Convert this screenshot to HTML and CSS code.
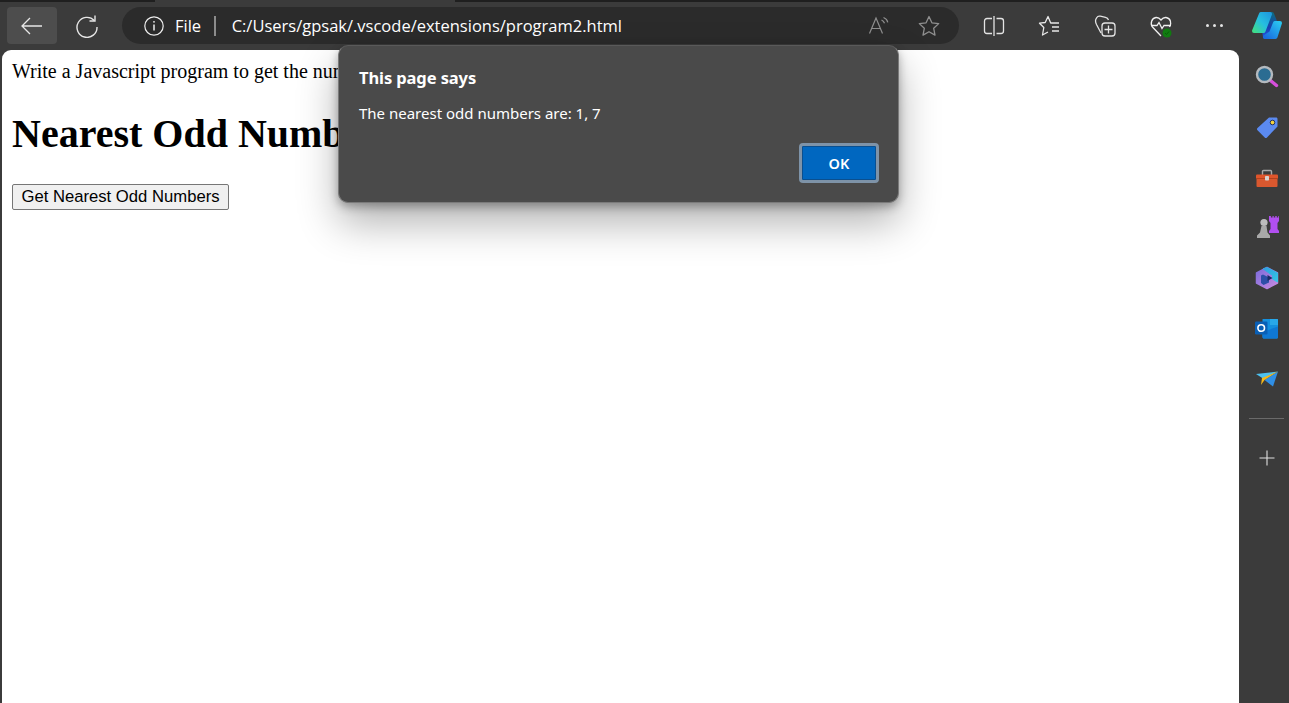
FILE: index.html
```html
<!DOCTYPE html>
<html lang="en">
<head>
<meta charset="utf-8">
<title>Nearest Odd Numbers</title>
<link rel="stylesheet" href="styles.css">
</head>
<body>
<div class="tabstrip"><div class="tabedge"></div><div class="tabgap"></div><div class="tabrest"></div></div>
<header class="toolbar">
  <button class="tool back" aria-label="Back">
    <svg width="24" height="24" viewBox="0 0 24 24" fill="none" stroke="#e6e6e6" stroke-width="1.3"><path d="M2 12h20M10 4l-8 8 8 8"/></svg>
  </button>
  <button class="tool reload" aria-label="Refresh">
    <svg width="24" height="24" viewBox="0 0 24 24" fill="none" stroke="#e6e6e6" stroke-width="1.4"><path d="M19.300 6.500A10 10 0 1 0 22 13"/><path d="M20 1.500v5.500h-5.500"/></svg>
  </button>
  <div class="omnibox">
    <svg class="info" width="20" height="20" viewBox="0 0 20 20" fill="none" stroke="#eee" stroke-width="1.2"><circle cx="10" cy="10" r="9.2"/><path d="M10 8.600v6" stroke-width="1.500"/><circle cx="10" cy="5.800" r=".9" fill="#eee" stroke="none"/></svg>
    <span class="scheme">File</span>
    <span class="sep"></span>
    <span class="url">C:/Users/gpsak/.vscode/extensions/program2.html</span>
    <span class="spacer"></span>
    <svg class="omni-ic" width="22" height="22" viewBox="0 0 22 22" fill="none" stroke="#8f8f8f" stroke-width="1.2"><path d="M1.500 18.500 8 3l6.500 15.500M4 13.500h9"/><path d="M13.500 5c1.500.7 2.500 1.600 3 3.200M15.500 2.500c2.300.9 3.800 2.500 4.300 4.800"/></svg>
    <svg class="omni-ic star" width="22" height="22" viewBox="0 0 22 22" fill="none" stroke="#8f8f8f" stroke-width="1.300"><path d="m11 1.500 2.900 6.300 6.800.8-5 4.700 1.300 6.800-6-3.400-6 3.400 1.300-6.800-5-4.700 6.800-.8z" stroke-linejoin="round"/></svg>
  </div>
  <div class="actions">
    <svg width="22" height="22" viewBox="0 0 22 22" fill="none" stroke="#e4e4e4" stroke-width="1.300"><path d="M9 3.500H4A2.500 2.500 0 0 0 1.500 6v10A2.500 2.500 0 0 0 4 18.500h5M13.500 3.500H18A2.500 2.500 0 0 1 20.500 6v10a2.500 2.500 0 0 1-2.500 2.500h-4.500M11 1v20"/></svg>
    <svg width="22" height="22" viewBox="0 0 22 22" fill="none" stroke="#e8e8e8" stroke-width="1.300"><path d="M14 8h-1.300L10 1.500 7.200 7.500l-5.700.7 4.300 4.300L4.500 20l5.500-3" stroke-linejoin="round"/><path d="M14 8h7M14 12h7M14 16h7"/></svg>
    <svg width="22" height="22" viewBox="0 0 22 22" fill="none" stroke="#e4e4e4" stroke-width="1.300"><path d="M7 18 2.500 9.500C1.500 7.500 1 6 2 4l.7-1.300C3.500 1.300 4.800.9 6.300 1.200l5.200 1.100c1.700.4 2.500 1.200 3 2.700"/><rect x="8" y="8" width="13" height="13" rx="3"/><path d="M14.500 10.500v8M10.500 14.500h8"/></svg>
    <svg width="24" height="24" viewBox="0 0 24 24" fill="none" stroke="#f0f0f0" stroke-width="1.300"><path d="M12 22 3.500 13C1 10 2.500 4 7 3.500c2.200-.2 3.800 1 5 2.500 1.200-1.500 2.800-2.700 5-2.500 4.500.5 6 5.500 3.500 9.500"/><path d="M2 11.500h6l2-3 3 6 2-3h7"/><circle cx="18" cy="19" r="4.500" fill="#107c10" stroke="none"/><path d="m16 19 1.500 1.500 2.500-3" stroke="#0b5a0b" stroke-width="1"/></svg>
    <span class="more"><i></i><i></i><i></i></span>
  </div>
  <svg class="copilot" width="32" height="30" viewBox="0 0 32 30">
    <defs>
      <linearGradient id="cp1" x1="0" y1="1" x2="1" y2="0"><stop offset="0" stop-color="#3fdc8a"/><stop offset=".5" stop-color="#26bfe0"/><stop offset="1" stop-color="#1f9be0"/></linearGradient>
      <linearGradient id="cp2" x1="0" y1="1" x2="1" y2="0"><stop offset="0" stop-color="#1a6be0"/><stop offset=".6" stop-color="#22a0ea"/><stop offset="1" stop-color="#2ac4f0"/></linearGradient>
      <linearGradient id="cp3" x1="0" y1="0" x2="0" y2="1"><stop offset="0" stop-color="#0e6a86"/><stop offset=".6" stop-color="#1a3fb0"/><stop offset="1" stop-color="#2456e0"/></linearGradient>
    </defs>
    <polygon points="16,4 21,4 25,14 24,24 14,27 13,20" fill="url(#cp3)" stroke="url(#cp3)" stroke-width="4" stroke-linejoin="round"/>
    <polygon points="10,4 19,4 12.500,21 3,21" fill="url(#cp1)" stroke="url(#cp1)" stroke-width="4" stroke-linejoin="round"/>
    <polygon points="24,13 29,13 24.500,27 14,27 20,23" fill="url(#cp2)" stroke="url(#cp2)" stroke-width="4" stroke-linejoin="round"/>
  </svg>
</header>
<div class="main">
  <main class="page">
    <p class="intro">Write a Javascript program to get the numbers nearest to a value</p>
    <h1 class="title">Nearest Odd Numbers</h1>
    <button class="get">Get Nearest Odd Numbers</button>
  </main>
  <aside class="sidebar">
    <svg width="24" height="24" viewBox="0 0 24 24" fill="none"><path d="m15.500 15.500 6 5" stroke="#d64fdc" stroke-width="3.400" stroke-linecap="round"/><circle cx="9.500" cy="9.500" r="7.500" fill="#2b6c92" stroke="#b4babf" stroke-width="2.400"/></svg>
    <svg width="24" height="24" viewBox="0 0 24 24"><path d="M14 2.500h7c1 0 1.500.6 1.500 1.500v7.500L12 22.500c-.7.7-1.600.7-2.300 0l-7.200-7.200c-.7-.7-.7-1.600 0-2.300z" fill="#5b8af0"/><circle cx="17.500" cy="7.500" r="2.300" fill="#f4d33c" stroke="#25305c" stroke-width="1"/></svg>
    <svg width="24" height="24" viewBox="0 0 24 24" fill="none"><path d="M7.500 9V5.500c0-.6.400-1 1-1h7c.6 0 1 .4 1 1V9" stroke="#a8a8a8" stroke-width="1.400"/><rect x="1" y="8.500" width="22" height="5" rx="1" fill="#e0552b"/><rect x="1.500" y="13" width="21" height="8" rx="1" fill="#d9582f"/><path d="M1 12.500h22" stroke="#a83d1c" stroke-width=".8"/><rect x="10" y="10" width="4" height="4.500" rx=".8" fill="#d8d2cf"/></svg>
    <svg width="24" height="24" viewBox="0 0 24 24"><path d="M17.500 0h1.200v1.500h1.600V0h1.400v1.500h1.600V0H24v5l-1.500 2v6l1.500 2v2H14v-2l1.500-2V7L14 5V0h1.900v1.500h1.600z" fill="#b14ff0"/><circle cx="9" cy="6.500" r="3.600" fill="#bdbdbd"/><path d="M6.500 10h5l1 6.500 2.500 3v2.500H2v-2.500L5 16.500z" fill="#a9a9a9"/></svg>
    <svg width="24" height="24" viewBox="0 0 24 24"><defs><linearGradient id="m1" x1="0" y1="0" x2="1" y2="1"><stop offset="0" stop-color="#7a6bdc"/><stop offset="1" stop-color="#c98be0"/></linearGradient><linearGradient id="m2" x1="0" y1="0" x2="1" y2="1"><stop offset="0" stop-color="#2f9fe0"/><stop offset="1" stop-color="#35c6e4"/></linearGradient></defs><path d="M12 1.500 22.500 7v10L12 22.500 1.500 17V7z" fill="url(#m1)" stroke="url(#m1)" stroke-width="1.500" stroke-linejoin="round"/><path d="M8 2.800 12 1.500 22.500 7v9l-5-3V9.500z" fill="url(#m2)" stroke="url(#m2)" stroke-width="1" stroke-linejoin="round"/><path d="M8 8.500l6 3v5l-5.500 2.500-2.500-2V9.500z" fill="#2d4ea8"/><path d="M12.500 9l5 3-5 3z" fill="#1c2b66"/></svg>
    <svg width="24" height="24" viewBox="0 0 24 24"><path d="M8 3h14c.7 0 1 .4 1 1v17c0 1-.8 1.500-1.500 1.500H9c-1 0-1.500-.6-1.500-1.500V4C7.500 3.400 7.500 3 8 3z" fill="#1490df"/><path d="M15 3h7c.7 0 1 .4 1 1v5h-8z" fill="#28a8ea"/><path d="M7.500 16 23 10.500V21c0 1-.8 1.500-1.500 1.500H9c-1 0-1.500-.6-1.500-1.500z" fill="#0f78d4"/><rect x="0" y="5.500" width="12.500" height="13" rx="1.200" fill="#0a5fb5"/><circle cx="6.200" cy="12" r="3.300" fill="none" stroke="#fff" stroke-width="1.600"/></svg>
    <svg width="24" height="24" viewBox="0 0 24 24"><path d="M1 7 23 4.500 8 11.500z" fill="#4cc2f1"/><path d="M23 4.500 9.500 13 18 19.500z" fill="#2f8fe6"/><path d="M23 4.500 7 11l-1 7 3.500-5z" fill="#f6b91a"/></svg>
    <hr class="divider">
    <svg class="plus" width="16" height="16" viewBox="0 0 16 16" stroke="#e0e0e0" stroke-width="1.100"><path d="M8 .5v15M.5 8h15"/></svg>
  </aside>
</div>
<div class="dialog" role="alertdialog">
  <h2 class="dlg-title">This page says</h2>
  <p class="dlg-msg">The nearest odd numbers are: 1, 7</p>
  <div class="dlg-actions"><button class="ok">OK</button></div>
</div>
</body>
</html>
```
FILE: styles.css
```css
* { box-sizing: border-box; }
html, body { margin: 0; height: 100%; overflow: hidden; }
body { background: #3b3b3b; display: flex; flex-direction: column; font-family: "Liberation Serif", serif; }
button { font: inherit; }

.tabstrip { height: 2px; background: #3b3b3b; flex: none; display: flex; }
.tabedge { width: 155px; background: #1f1f1f; }
.tabgap { width: 300px; }
.tabrest { flex: 1; background: #1f1f1f; }

.toolbar { height: 48px; flex: none; display: flex; align-items: flex-start; padding: 5px 0 0 7px; background: #3b3b3b; }
.tool { width: 50px; height: 37px; border: 0; border-radius: 4px; background: transparent; padding: 0; display: flex; align-items: center; justify-content: center; flex: none; }
.back { background: #4d4d4d; }
.reload { margin-left: 5px; }
.omnibox { width: 837px; height: 37px; margin-left: 10px; padding-left: 22px; padding-right: 19px; border-radius: 19px; background: #2b2b2b; display: flex; align-items: center; color: #fff; font: 17px/1 "Open Sans", sans-serif; flex: none; }
.scheme { margin: 2px 0 0 11px; font-size: 16.500px; }
.sep { width: 1.500px; height: 20px; background: #8c8c8c; margin: 0 16px 0 13px; }
.url { margin-top: 2px; font-size: 16.500px; }
.spacer { flex: 1; }
.omni-ic { flex: none; }
.star { margin-left: 28px; }

.actions { display: flex; align-items: center; gap: 33.300px; height: 37px; margin-left: 24px; flex: none; }
.more { display: flex; gap: 4px; width: 20px; }
.more i { width: 3px; height: 3px; background: #e4e4e4; border-radius: 50%; }
.copilot { margin: 3px 0 0 25px; flex: none; }

.main { flex: 1; display: flex; min-height: 0; }
.page { flex: 1; margin-left: 2px; background: #fff; border-radius: 9px 9px 0 0; padding: 10px; color: #000; }
.intro { margin: 0; font-size: 20px; line-height: 23px; }
.title { margin: 28px 0 0; font-size: 40px; line-height: 46px; font-weight: 700; }
.get { display: block; margin-top: 27px; width: 217px; height: 26px; padding: 0; background: #f0f0f0; border: 1px solid #767676; border-radius: 2px; font: 16.670px "Liberation Sans", sans-serif; color: #000; }

.sidebar { width: 50px; flex: none; display: flex; flex-direction: column; align-items: center; padding: 15px 0 0 5px; gap: 26.300px; }
.divider { width: 35px; height: 1px; border: 0; margin: 1px 0 0; background: #6a6a6a; }
.plus { margin-top: 5px; }

.dialog { position: absolute; left: 338px; top: 45px; width: 561px; height: 158px; padding: 21px 20px 0; border: 1px solid #7a7a7a; border-top-color: #5a5a5a; border-radius: 10px; background: #4a4a4a; color: #fff; font-family: "Noto Sans", sans-serif; box-shadow: 0 20px 40px rgba(0,0,0,.3), 0 4px 10px rgba(0,0,0,.3); }
.dlg-title { margin: 0; font-size: 16.500px; line-height: 22px; font-weight: 700; letter-spacing: -.1px; }
.dlg-msg { margin: 14px 0 0; font-size: 15px; line-height: 20px; }
.dlg-actions { display: flex; justify-content: flex-end; margin-top: 20px; padding-right: 0; }
.ok { width: 80px; height: 40px; margin-right: -1px; padding: 0; background: #0067c0; border: 3px solid #7e93a8; border-radius: 4px; color: #fff; font: 600 14.500px "Noto Sans", sans-serif; box-shadow: inset 0 0 0 1px #0a4f8f; }
```
